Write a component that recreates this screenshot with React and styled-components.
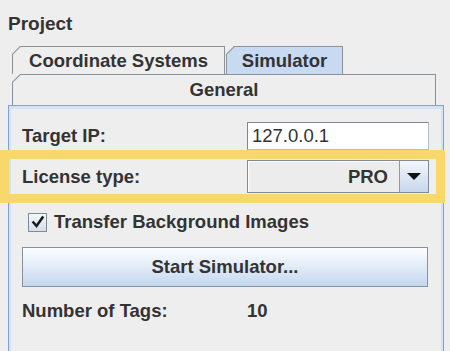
import React from 'react'
import styled, { createGlobalStyle } from 'styled-components'

const GlobalStyle = createGlobalStyle`
    html, body {
        margin: 0;
        padding: 0;
        background: #eeeeee;
        overflow: hidden;
    }
    body {
        font-family: "Liberation Sans", Arial, sans-serif;
        color: #333333;
    }
`

export default function App() {
    return (
        <>
            <GlobalStyle />
            <Frame>
                <Title>Project</Title>
                <TabRow>
                    <Tab width={213}>
                        <TabFace>Coordinate Systems</TabFace>
                    </Tab>
                    <Tab width={117} selected>
                        <TabFace selected>Simulator</TabFace>
                    </Tab>
                </TabRow>
                <WideTab>
                    <WideTabFace>General</WideTabFace>
                </WideTab>
                <Panel>
                    <FormRow height={28}>
                        <Label>Target IP:</Label>
                        <TextField>127.0.0.1</TextField>
                    </FormRow>
                    <HighlightRow height={33}>
                        <Label>License type:</Label>
                        <Combo>
                            <ComboValue>PRO</ComboValue>
                            <ComboArrow>
                                <svg width="14" height="8" viewBox="0 0 14 8">
                                    <path d="M0 0 L14 0 L7 7 Z" fill="#111" />
                                </svg>
                            </ComboArrow>
                        </Combo>
                    </HighlightRow>
                    <CheckRow>
                        <CheckBox>
                            <svg width="14" height="14" viewBox="0 0 14 14">
                                <path d="M2.5 7.5 L5.5 11 L11.5 2.5" fill="none" stroke="#1a1a1a" strokeWidth="2.6" strokeLinecap="square" />
                            </svg>
                        </CheckBox>
                        <span>Transfer Background Images</span>
                    </CheckRow>
                    <Button>Start Simulator...</Button>
                    <FormRow height={20} gap={13}>
                        <Label>Number of Tags:</Label>
                        <Label>10</Label>
                    </FormRow>
                </Panel>
            </Frame>
        </>
    )
}

const Frame = styled.div`
    padding-left: 8px;
    width: 436px;
    height: 351px;
    display: flex;
    flex-direction: column;
`

const Title = styled.div`
    margin-top: 12px;
    height: 24px;
    line-height: 24px;
    font-size: 19px;
    font-weight: bold;
`

const TabRow = styled.div`
    margin-top: 10px;
    margin-left: 4px;
    height: 28px;
    display: flex;
    gap: 1px;
`

const chamfer = 'polygon(8px 0, 100% 0, 100% 100%, 0 100%, 0 8px)'

const Tab = styled.div`
    width: ${p => p.width}px;
    height: 28px;
    background: #8d9297;
    clip-path: ${chamfer};
    padding: 1px 1px 0 1px;
    box-sizing: border-box;
`

const TabFace = styled.div`
    height: 100%;
    background: ${p => p.selected ? '#c7daf1' : '#eeeeee'};
    clip-path: polygon(7.6px 0, 100% 0, 100% 100%, 0 100%, 0 7.6px);
    display: flex;
    align-items: center;
    justify-content: center;
    font-size: 18.5px;
    font-weight: bold;
`

const WideTab = styled(Tab)`
    width: 424px;
    height: 31px;
    margin-left: 4px;
`

const WideTabFace = styled(TabFace)``

const Panel = styled.div`
    flex: 1;
    border: 1px solid #86a2ca;
    border-bottom: none;
    box-shadow: inset 2px 3px 0 #d3e2f5, inset -2px 0 0 #d3e2f5;
    padding: 16px 14px 0 13px;
    display: flex;
    flex-direction: column;
`

const FormRow = styled.div`
    display: grid;
    grid-template-columns: 225px 1fr;
    align-items: center;
    height: ${p => p.height}px;
    margin-top: ${p => p.gap || 0}px;
    font-size: 18.5px;
`

const HighlightRow = styled(FormRow)`
    position: relative;
    margin-top: 10px;
    &::after {
        content: '';
        position: absolute;
        left: -22px;
        right: -16px;
        top: -10px;
        bottom: -10px;
        border: 9px solid #f8d86a;
        pointer-events: none;
    }
`

const Label = styled.div`
    font-weight: bold;
`

const TextField = styled.div`
    height: 28px;
    box-sizing: border-box;
    background: #ffffff;
    border: 1px solid #b5bcc4;
    border-top-color: #7b8794;
    border-left-color: #7b8794;
    padding-left: 4px;
    display: flex;
    align-items: center;
    font-size: 18.5px;
`

const Combo = styled.div`
    height: 33px;
    box-sizing: border-box;
    border: 1px solid #7f8b98;
    display: flex;
`

const ComboValue = styled.div`
    flex: 1;
    background: #ececec;
    box-shadow: inset 1px 1px 0 #ffffff;
    display: flex;
    align-items: center;
    justify-content: flex-end;
    padding-right: 11px;
    font-weight: bold;
`

const ComboArrow = styled.div`
    width: 28px;
    border-left: 1px solid #8d99a6;
    background: linear-gradient(#f3f7fc, #c6d7eb);
    display: flex;
    align-items: center;
    justify-content: center;
`

const CheckRow = styled.div`
    margin-top: 19px;
    margin-left: 6px;
    height: 20px;
    display: flex;
    align-items: center;
    gap: 7px;
    font-size: 18.5px;
    font-weight: bold;
`

const CheckBox = styled.div`
    width: 19px;
    height: 19px;
    box-sizing: border-box;
    border: 1px solid #7f8b98;
    background: linear-gradient(#f6f8fb, #d5dee8);
    display: flex;
    align-items: center;
    justify-content: center;
`

const Button = styled.div`
    margin-top: 15px;
    height: 40px;
    width: 406px;
    box-sizing: border-box;
    border: 1px solid #8592a0;
    background: linear-gradient(#fbfdff 0%, #eaf1fa 35%, #c4d7ee 100%);
    display: flex;
    align-items: center;
    justify-content: center;
    font-size: 18.5px;
    font-weight: bold;
`
